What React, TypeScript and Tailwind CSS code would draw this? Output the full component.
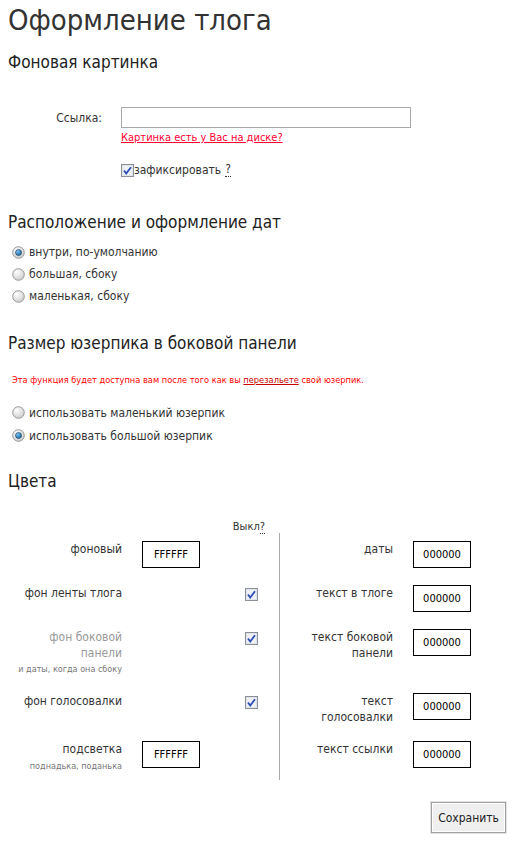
import React from "react";

const font = { fontFamily: "'DejaVu Sans Condensed', 'DejaVu Sans', Tahoma, sans-serif" };

function Radio({ checked }: { checked?: boolean }) {
  return (
    <svg width="13" height="13" viewBox="0 0 13 13" className="shrink-0">
      <defs>
        <radialGradient id="rg" cx="0.35" cy="0.3" r="0.8">
          <stop offset="0" stopColor="#ffffff" />
          <stop offset="1" stopColor="#c8c8c8" />
        </radialGradient>
        <radialGradient id="dot" cx="0.35" cy="0.3" r="0.8">
          <stop offset="0" stopColor="#7fc4f0" />
          <stop offset="1" stopColor="#0b5f9c" />
        </radialGradient>
      </defs>
      <circle cx="6.5" cy="6.5" r="5.8" fill="url(#rg)" stroke="#8f8f8f" strokeWidth="0.9" />
      {checked && <circle cx="6.5" cy="6.5" r="3" fill="url(#dot)" stroke="#1d3a5a" strokeWidth="0.6" />}
    </svg>
  );
}

function Check() {
  return (
    <svg width="13" height="13" viewBox="0 0 13 13" className="shrink-0">
      <rect x="0.5" y="0.5" width="12" height="12" fill="#dfe3ea" stroke="#8a8f99" />
      <rect x="2" y="2" width="9" height="9" fill="#eef0f4" />
      <path d="M3 6.5 L5.2 9.5 L10 3.2" fill="none" stroke="#2a4bb8" strokeWidth="1.8" />
    </svg>
  );
}

function ColorBox({ value }: { value: string }) {
  return (
    <div className="w-[58px] h-[27px] border border-black flex items-center justify-center text-[11px] text-black">
      {value}
    </div>
  );
}

function H2({ children, className }: { children: React.ReactNode; className: string }) {
  return <h2 className={`text-[17px] leading-[20px] text-[#222] ${className}`}>{children}</h2>;
}

const rightRows = [
  { l: ["даты"], h: "h-[44px]" },
  { l: ["текст в тлоге"], h: "h-[44px]" },
  { l: ["текст боковой", "панели"], h: "h-[64px]" },
  { l: ["текст", "голосовалки"], h: "h-[48px]" },
  { l: ["текст ссылки"], h: "h-[44px]" },
];

export default function App() {
  return (
    <div style={font} className="w-[526px] min-h-[841px] bg-white text-[#333] text-[12px] leading-[16px] px-2 font-stretch-condensed">
      <h1 className="text-[29px] leading-[36px] pt-[2px] text-[#333]">Оформление тлога</h1>

      <H2 className="mt-[14px]">Фоновая картинка</H2>

      <div className="flex mt-[35px]">
        <div className="w-[94px] text-right pt-[3px]">Ссылка:</div>
        <div className="ml-[19px]">
          <div className="w-[290px] h-[21px] border border-[#aaa]" />
          <a className="block mt-[3px] text-[11px] leading-[14px] text-[#ff0033] underline">Картинка есть у Вас на диске?</a>
          <div className="flex items-center mt-[18px] h-[14px]">
            <Check />
            <span>зафиксировать</span>
            <span className="ml-[4px] border-b border-dotted border-[#333] leading-[13px]">?</span>
          </div>
        </div>
      </div>

      <H2 className="mt-[35px]">Расположение и оформление дат</H2>
      <div className="mt-[9px] pl-[4px] flex flex-col">
        <label className="flex items-center gap-[4px] h-[22px]"><Radio checked />внутри, по-умолчанию</label>
        <label className="flex items-center gap-[4px] h-[22px]"><Radio />большая, сбоку</label>
        <label className="flex items-center gap-[4px] h-[22px]"><Radio />маленькая, сбоку</label>
      </div>

      <H2 className="mt-[26px]">Размер юзерпика в боковой панели</H2>
      <p className="mt-[21px] pl-[4px] text-[9.2px] leading-[12px] text-[#ff0000]">
        Эта функция будет доступна вам после того как вы <a className="underline text-[#cc0000]">перезальете</a> свой юзерпик.
      </p>
      <div className="mt-[15px] pl-[4px] flex flex-col">
        <label className="flex items-center gap-[4px] h-[23px]"><Radio />использовать маленький юзерпик</label>
        <label className="flex items-center gap-[4px] h-[23px]"><Radio checked />использовать большой юзерпик</label>
      </div>

      <H2 className="mt-[24px]">Цвета</H2>

      <div className="mt-[29px] grid grid-cols-[271px_1px_1fr]">
        <div className="text-[11px] leading-[14px] text-right pr-[14px] h-[21px]">
          Выкл<span className="border-b border-dotted border-[#333]">?</span>
        </div>
        <div />
        <div />

        {/* левая колонка */}
        <div className="flex flex-col">
          <div className="flex h-[44px]">
            <div className="w-[114px] text-right">фоновый</div>
            <div className="ml-[20px]"><ColorBox value="FFFFFF" /></div>
          </div>
          <div className="flex h-[44px]">
            <div className="w-[114px] text-right">фон ленты тлога</div>
            <div className="ml-[123px] pt-[3px]"><Check /></div>
          </div>
          <div className="flex h-[64px]">
            <div className="w-[114px] text-right text-[#999]">
              фон боковой<br />панели
              <div className="text-[9px] leading-[14px] text-[#777] whitespace-nowrap mt-[1px]">и даты, когда она сбоку</div>
            </div>
            <div className="ml-[123px] pt-[3px]"><Check /></div>
          </div>
          <div className="flex h-[48px]">
            <div className="w-[114px] text-right">фон голосовалки</div>
            <div className="ml-[123px] pt-[3px]"><Check /></div>
          </div>
          <div className="flex h-[44px]">
            <div className="w-[114px] text-right">
              подсветка
              <div className="text-[9px] leading-[14px] text-[#777] mt-[2px]">поднадька, поданька</div>
            </div>
            <div className="ml-[20px]"><ColorBox value="FFFFFF" /></div>
          </div>
        </div>

        <div className="bg-[#aaa] -mt-[8px] mb-[5px]" />

        {/* правая колонка */}
        <div className="flex flex-col">
          {rightRows.map((r, i) => (
            <div key={i} className={`flex ${r.h}`}>
              <div className="w-[113px] text-right">
                {r.l.map((t, j) => <div key={j}>{t}</div>)}
              </div>
              <div className="ml-[20px]"><ColorBox value="000000" /></div>
            </div>
          ))}
        </div>
      </div>

      <div className="flex justify-end mt-[17px] pr-[12px]">
        <button className="w-[75px] h-[31px] border border-[#a0a0a0] bg-[#efefef] text-[12px] text-[#222] shadow-[inset_0_0_0_1px_#fff,0_0_0_1px_#e3e3e3]">
          Сохранить
        </button>
      </div>
    </div>
  );
}
